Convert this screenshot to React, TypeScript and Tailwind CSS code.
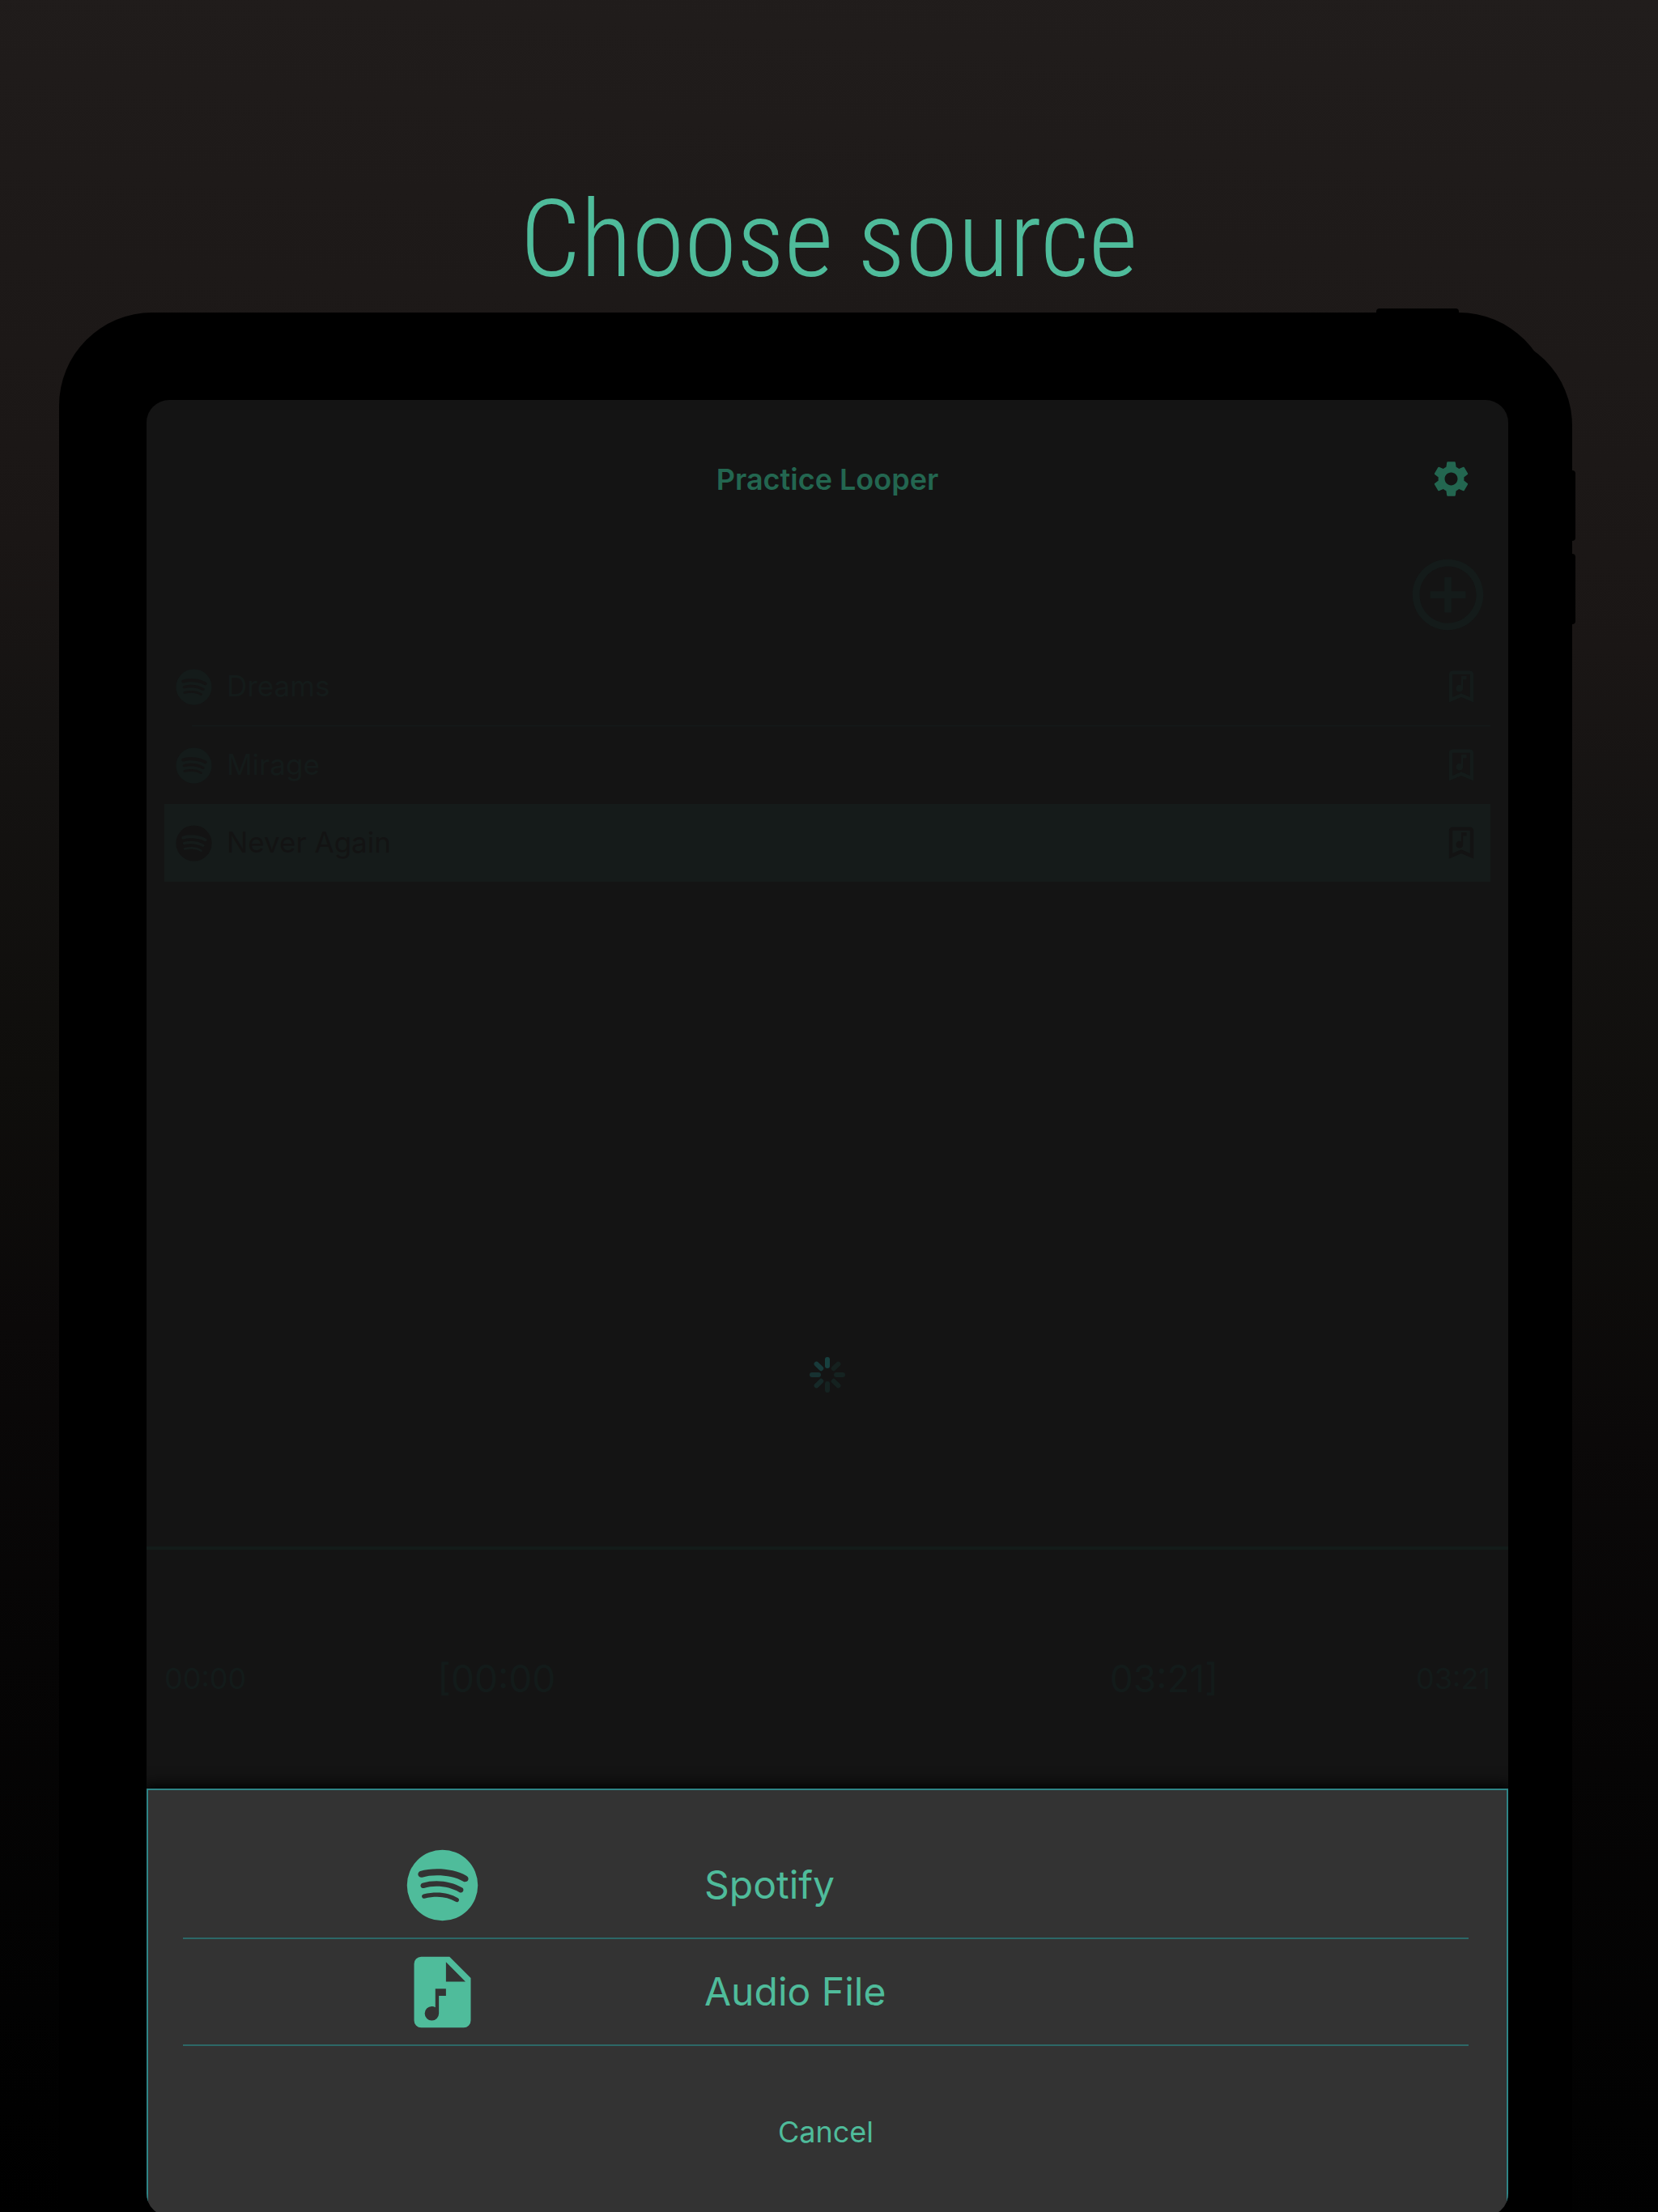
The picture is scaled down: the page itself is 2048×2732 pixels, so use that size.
import React from "react";
import { MdAddCircleOutline, MdSettings } from "react-icons/md";

const SPOTIFY =
  "M17.9,10.9C14.7,9 9.35,8.8 6.3,9.75C5.8,9.9 5.3,9.6 5.15,9.15C5,8.65 5.3,8.15 5.75,8C9.3,6.95 15.15,7.15 18.85,9.35C19.3,9.6 19.45,10.2 19.2,10.65C18.95,11 18.35,11.15 17.9,10.9M17.8,13.7C17.55,14.05 17.1,14.2 16.75,13.95C14.05,12.3 9.95,11.8 6.8,12.8C6.4,12.9 5.95,12.7 5.85,12.3C5.75,11.9 5.95,11.45 6.35,11.35C10,10.25 14.5,10.8 17.6,12.7C17.9,12.85 18.05,13.35 17.8,13.7M16.6,16.45C16.4,16.75 16.05,16.85 15.75,16.65C13.4,15.2 10.45,14.9 6.95,15.7C6.6,15.8 6.3,15.55 6.2,15.25C6.1,14.9 6.35,14.6 6.65,14.5C10.45,13.65 13.75,14 16.35,15.6C16.7,15.75 16.75,16.15 16.6,16.45M12,2A10,10 0 0,0 2,12A10,10 0 0,0 12,22A10,10 0 0,0 22,12A10,10 0 0,0 12,2Z";
const FILE_MUSIC =
  "M13,9H18.5L13,3.5V9M6,2H14L20,8V20A2,2 0 0,1 18,22H6A2,2 0 0,1 4,20V4A2,2 0 0,1 6,2M9,16A2,2 0 0,0 7,18A2,2 0 0,0 9,20A2,2 0 0,0 11,18V13H13V11H10V16.27C9.71,16.1 9.36,16 9,16Z";
const BOOKMARK_MUSIC =
  "M17,18V5H7V18L12,15.82L17,18M17,3A2,2 0 0,1 19,5V21L12,18L5,21V5C5,3.89 5.9,3 7,3H17M15,6V8H13V13A2,2 0 0,1 11,15A2,2 0 0,1 9,13A2,2 0 0,1 11,11C11.36,11 11.7,11.1 12,11.27V6H15Z";

function Icon({ d, className }: { d: string; className: string }) {
  return (
    <svg viewBox="0 0 24 24" fill="currentColor" aria-hidden="true" className={className}>
      <path d={d} />
    </svg>
  );
}

const SPOKES = ["#17403f", "#15211f", "#152321", "#152220", "#152321", "#162928", "#173131", "#183a3a"];

function Spinner() {
  return (
    <svg viewBox="-22 -22 44 44" className="size-11" role="img" aria-label="Loading">
      {SPOKES.map((c, i) => (
        <line key={i} x1="0" y1="-11" x2="0" y2="-19" stroke={c} strokeWidth="6" strokeLinecap="round" transform={`rotate(${i * 45})`} />
      ))}
    </svg>
  );
}

function SongRow({ title, selected, divider }: { title: string; selected?: boolean; divider?: boolean }) {
  return (
    <li className={selected ? "bg-[#151b1a] text-[#131313]" : "text-[#141b1a]"}>
      <div className="flex h-24 items-center px-[10px]">
        <button className="flex flex-1 items-center gap-[14px] text-left">
          <Icon d={SPOTIFY} className="size-[53px]" />
          <span className="pb-[2px] text-[35px] leading-[44px]">{title}</span>
        </button>
        <button aria-label={`Bookmarks of ${title}`}>
          <Icon d={BOOKMARK_MUSIC} className="size-[52px]" />
        </button>
      </div>
      {divider && <div className="ml-[34px] h-px bg-[#141b1a]" />}
    </li>
  );
}

function SourceRow({ label, icon }: { label: string; icon: string }) {
  return (
    <li>
      <button className="grid h-[132px] w-full grid-cols-[640px_1fr] items-center gap-1 border-b-2 border-[#2c6867] text-left">
        <Icon d={icon} className="size-[105px] justify-self-center" />
        <span className="text-[48px] leading-[60px]">{label}</span>
      </button>
    </li>
  );
}

export default function App() {
  return (
    <main className="flex h-screen flex-col overflow-hidden bg-[linear-gradient(184deg,#211d1c_0%,#1a1615_28%,#151312_36%,#0f0e0c_51%,#0b0909_62%,#060505_76%,#020202_91%,#000_100%)] font-['Inter',sans-serif]">
      <header className="flex h-[386px] shrink-0 items-end justify-center pb-[12px]">
        <h1 className="font-['Roboto_Condensed','Liberation_Sans_Narrow',sans-serif] text-[132px] leading-[156px] font-[350] text-[#4fbc9b]">
          Choose source
        </h1>
      </header>

      {/* Tablet body: the shadow gives the second, shifted outline */}
      <div className="relative mr-[131px] ml-[73px] shrink-0 rounded-[115px] bg-black pt-[108px] pr-[54px] pb-[108px] pl-[108px] shadow-[25px_25px_0_#000]">
        <span className="absolute -top-[5px] right-[115px] h-3 w-[102px] rounded-sm bg-black" />
        <span className="absolute top-[195px] -right-[29px] h-[87px] w-3 rounded-sm bg-black" />
        <span className="absolute top-[298px] -right-[29px] h-[87px] w-3 rounded-sm bg-black" />

        <div className="flex h-[2243px] flex-col overflow-hidden rounded-[28px] bg-[#141414]">
          <div className="grid h-[188px] grid-cols-[1fr_auto_1fr] items-center px-[44px] pt-[7px] text-[#236650]">
            <h2 className="col-start-2 text-[36px] leading-[44px] font-semibold">Practice Looper</h2>
            <button aria-label="Settings" className="justify-self-end">
              <MdSettings className="size-[53px]" />
            </button>
          </div>
          <div className="flex justify-end pr-[22px]">
            <button aria-label="Add song" className="text-[#141b1a]">
              <MdAddCircleOutline className="size-[105px]" />
            </button>
          </div>
          <ul className="mx-[22px] mt-[13px]">
            <SongRow title="Dreams" divider />
            <SongRow title="Mirage" />
            <SongRow title="Never Again" selected />
          </ul>

          <div className="flex flex-1 flex-col items-center justify-end pb-[190px]">
            <Spinner />
          </div>

          <section className="flex h-[299px] flex-col justify-center border-t-4 border-[#131c1a] text-[#131b1a]">
            <div className="flex justify-between px-[22px] pt-[22px]">
              <div className="flex items-center gap-[236px]">
                <span className="text-[36px] leading-[60px]">00:00</span>
                <span className="text-[46px] leading-[60px]">[00:00</span>
              </div>
              <div className="flex items-center gap-[244px]">
                <span className="text-[46px] leading-[60px]">03:21]</span>
                <span className="text-[36px] leading-[60px]">03:21</span>
              </div>
            </div>
          </section>

          <section
            role="dialog"
            aria-label="Choose source"
            className="flex h-[528px] flex-col border-2 border-b-0 border-[#2e8486] bg-[#333333] pr-[47px] pl-[43px] text-[#4fbc9b] shadow-[0_0_16px_4px_#000000]"
          >
            <ul className="pt-[52px]">
              <SourceRow label="Spotify" icon={SPOTIFY} />
              <SourceRow label="Audio File" icon={FILE_MUSIC} />
            </ul>
            <button className="mt-[84px] self-center text-[36px] leading-[44px]">Cancel</button>
          </section>
        </div>
      </div>
    </main>
  );
}
